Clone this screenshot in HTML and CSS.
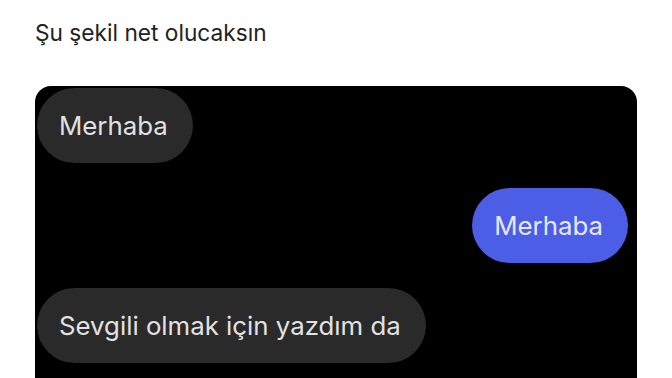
FILE: index.html
```html
<!DOCTYPE html>
<html lang="tr">
<head>
    <meta charset="UTF-8">
    <title>Şu şekil net olucaksın</title>
    <link rel="stylesheet" href="styles.css">
</head>
<body>
    <div class="post">
        <p class="caption">Şu şekil net olucaksın</p>
        <div class="chat">
            <div class="bubble in">Merhaba</div>
            <div class="bubble out">Merhaba</div>
            <div class="bubble in">Sevgili olmak için yazdım da</div>
        </div>
    </div>
</body>
</html>
```

FILE: styles.css
```css
body {
    background: #fff;
    margin: 0;
    padding: 0;
    height: 378px;
    overflow: hidden;
    font-family: Inter, "Noto Sans", sans-serif;
}
.post {
    padding: 0 35px;
}
.caption {
    margin: 0;
    padding-top: 19px;
    height: 86px;
    box-sizing: border-box;
    font-size: 22.7px;
    line-height: 28px;
    color: #222;
}
.chat {
    background: #000;
    border-radius: 16px 16px 0 0;
    height: 300px;
    padding: 2px 9px 0 2px;
    display: flex;
    flex-direction: column;
    align-items: flex-start;
    gap: 25px;
}
.bubble {
    height: 75px;
    line-height: 75px;
    padding: 0 25px 0 22px;
    border-radius: 38px;
    font-size: 25.8px;
    white-space: nowrap;
}
.bubble.in {
    background: #2a2a2a;
    color: #e2e2e2;
}
.bubble.out {
    align-self: flex-end;
    background: #4c5de6;
    color: #e6e8ff;
}
```
